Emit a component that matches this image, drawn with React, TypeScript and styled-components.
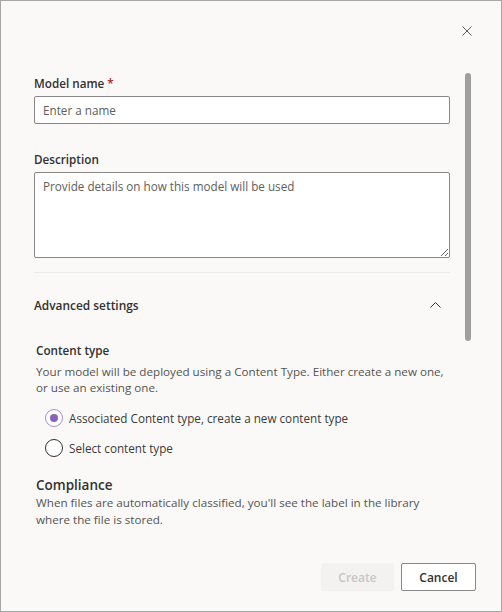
import React from 'react';
import styled, { createGlobalStyle } from 'styled-components';

const Global = createGlobalStyle`
  html, body { margin: 0; padding: 0; background: #faf9f8; }
  *, *::before, *::after { box-sizing: border-box; }
  body { font-family: "Open Sans", "Noto Sans", sans-serif; -webkit-font-smoothing: antialiased; }
`;

const Dialog = styled.div`
  width: 502px;
  height: 612px;
  border: 1px solid #a6a6a6;
  background: #faf9f8;
  display: flex;
  flex-direction: column;
  overflow: hidden;
  color: #323130;
`;

const Header = styled.div`
  height: 70px;
  flex: none;
  display: flex;
  justify-content: flex-end;
  align-items: flex-start;
  padding: 18px 22px 0 0;
`;

const IconButton = styled.button`
  width: 24px;
  height: 24px;
  border: none;
  background: transparent;
  padding: 0;
  display: flex;
  align-items: center;
  justify-content: center;
  cursor: pointer;
`;

const Body = styled.div`
  flex: 1;
  min-height: 0;
  display: flex;
  overflow: hidden;
  padding-left: 33px;
`;

const Content = styled.div`
  width: 416px;
  flex: none;
  padding-top: 4px;
`;

const ScrollColumn = styled.div`
  width: 6px;
  margin-left: 15px;
  padding-top: 2px;
  flex: none;
`;

const Thumb = styled.div`
  width: 6px;
  height: 268px;
  border-radius: 3px;
  background: #a19f9d;
`;

const Label = styled.label<{ $gap?: number }>`
  display: block;
  font-size: 11.7px;
  line-height: 16px;
  font-weight: 600;
  color: #323130;
  margin-top: ${p => p.$gap ?? 0}px;
  margin-bottom: 5px;
`;

const Required = styled.span`
  color: #a4262c;
  margin-left: 3px;
`;

const TextInput = styled.input`
  display: block;
  width: 100%;
  height: 28px;
  border: 1px solid #8a8886;
  border-radius: 2px;
  background: #ffffff;
  padding: 0 8px;
  font-family: inherit;
  font-size: 11.7px;
  color: #323130;
  outline: none;
  &::placeholder { color: #605e5c; }
`;

const TextArea = styled.textarea`
  display: block;
  width: 100%;
  height: 86px;
  border: 1px solid #8a8886;
  border-radius: 2px;
  background: #ffffff;
  padding: 5px 8px;
  font-family: inherit;
  font-size: 11.7px;
  line-height: 16px;
  color: #323130;
  resize: vertical;
  outline: none;
  &::placeholder { color: #605e5c; }
`;

const Divider = styled.hr`
  border: none;
  height: 1px;
  background: #edebe9;
  margin: 14px 0 0;
`;

const SectionToggle = styled.div`
  height: 64px;
  display: flex;
  align-items: center;
  justify-content: space-between;
  padding-right: 9px;
  font-size: 11.9px;
  font-weight: 600;
  color: #323130;
`;

const Section = styled.div`
  padding-left: 2px;
  padding-top: 5px;
`;

const SubHeading = styled.div`
  font-size: 11.7px;
  line-height: 16px;
  font-weight: 600;
  color: #323130;
`;

const Heading = styled.div`
  font-size: 13.5px;
  line-height: 18px;
  font-weight: 600;
  color: #323130;
  margin-top: 13px;
`;

const Paragraph = styled.p<{ $lh: number; $top: number }>`
  margin: ${p => p.$top}px 0 0;
  font-size: 11.65px;
  line-height: ${p => p.$lh}px;
  color: #55534f;
`;

const RadioGroup = styled.div`
  display: flex;
  flex-direction: column;
  padding-left: 9px;
  margin-top: 7px;
`;

const RadioRow = styled.label`
  height: 30px;
  display: flex;
  align-items: center;
  gap: 6px;
  font-size: 11.7px;
  color: #3b3a39;
`;

const RadioCircle = styled.span<{ $checked: boolean }>`
  width: 18px;
  height: 18px;
  border-radius: 50%;
  border: 1px solid ${p => (p.$checked ? '#a78fd2' : '#323130')};
  background: #ffffff;
  display: flex;
  align-items: center;
  justify-content: center;
  flex: none;
  &::after {
    content: '';
    width: 8px;
    height: 8px;
    border-radius: 50%;
    background: #8764b8;
    display: ${p => (p.$checked ? 'block' : 'none')};
  }
`;

const Footer = styled.div`
  flex: none;
  display: flex;
  justify-content: flex-end;
  gap: 7px;
  padding: 16px 25px 20px 0;
`;

const Button = styled.button<{ $primary?: boolean }>`
  height: 28px;
  padding: 0;
  font-family: inherit;
  font-size: 12px;
  font-weight: 600;
  border-radius: 2px;
  ${p =>
    p.$primary
      ? `width: 73px; background: #f3f2f1; color: #c8c6c4; border: 1px solid #f3f2f1;`
      : `width: 75px; background: #ffffff; color: #323130; border: 1px solid #8a8886;`}
`;

const radios = [
  { label: 'Associated Content type, create a new content type', checked: true },
  { label: 'Select content type', checked: false },
];

export default function App() {
  return (
    <>
      <Global />
      <Dialog>
        <Header>
          <IconButton aria-label="Close">
            <svg width="10" height="10" viewBox="0 0 10 10">
              <path d="M0.5 0.5 L9.5 9.5 M9.5 0.5 L0.5 9.5" stroke="#605e5c" strokeWidth="1" fill="none" />
            </svg>
          </IconButton>
        </Header>
        <Body>
          <Content>
            <Label>
              Model name<Required>*</Required>
            </Label>
            <TextInput placeholder="Enter a name" />
            <Label $gap={27}>Description</Label>
            <TextArea placeholder="Provide details on how this model will be used" />
            <Divider />
            <SectionToggle>
              <span>Advanced settings</span>
              <svg width="11" height="6" viewBox="0 0 11 6">
                <path d="M0.5 5.5 L5.5 0.5 L10.5 5.5" stroke="#323130" strokeWidth="1" fill="none" />
              </svg>
            </SectionToggle>
            <Section>
              <SubHeading>Content type</SubHeading>
              <Paragraph $lh={16} $top={6}>
                Your model will be deployed using a Content Type. Either create a new one, or use an existing one.
              </Paragraph>
              <RadioGroup>
                {radios.map(r => (
                  <RadioRow key={r.label}>
                    <RadioCircle $checked={r.checked} />
                    {r.label}
                  </RadioRow>
                ))}
              </RadioGroup>
              <Heading>Compliance</Heading>
              <Paragraph $lh={17} $top={0}>
                When files are automatically classified, you'll see the label in the library where the file is stored.
              </Paragraph>
            </Section>
          </Content>
          <ScrollColumn>
            <Thumb />
          </ScrollColumn>
        </Body>
        <Footer>
          <Button $primary disabled>Create</Button>
          <Button>Cancel</Button>
        </Footer>
      </Dialog>
    </>
  );
}
